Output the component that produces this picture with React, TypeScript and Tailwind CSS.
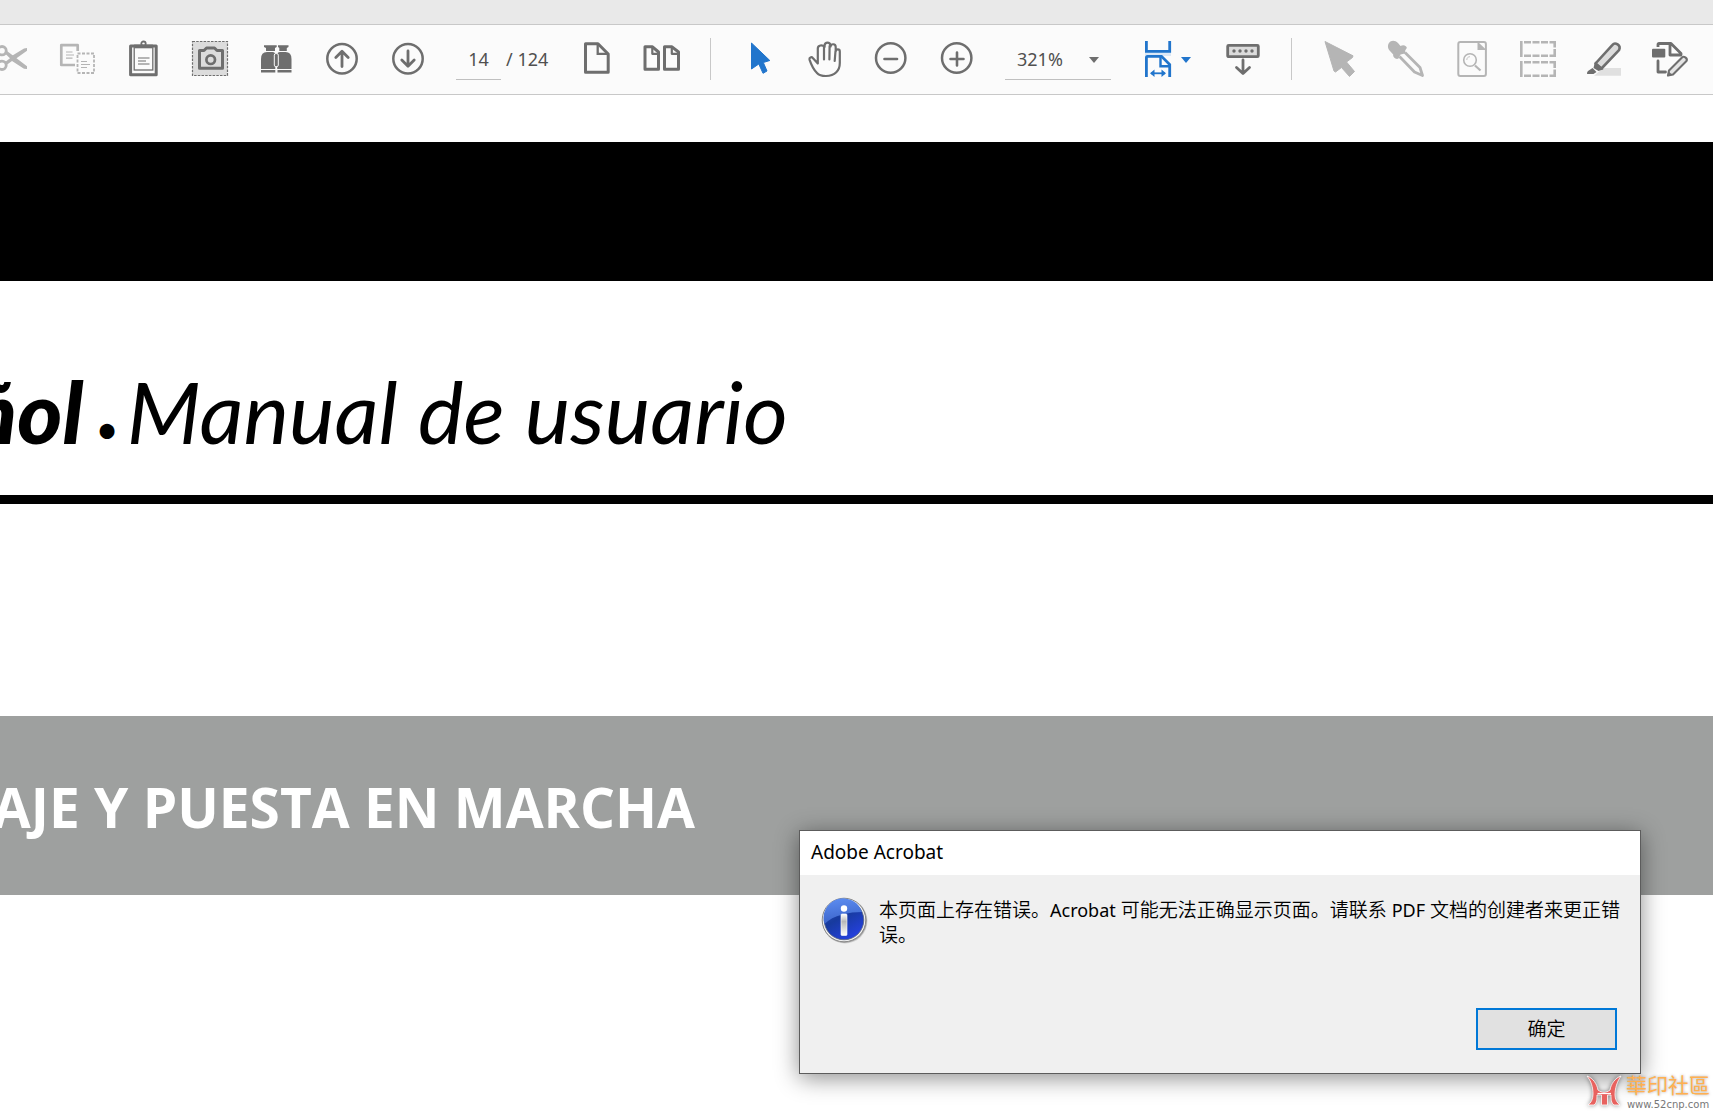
import React from "react";

const DARK = "#6e6e6e";
const LIGHT = "#b5b5b5";
const BLUE = "#2175cc";

function Tool({ label, children }: { label: string; children: React.ReactNode }) {
  return (
    <button type="button" aria-label={label} className="flex h-9 w-[66px] shrink-0 justify-center">
      <svg viewBox="0 0 36 36" className="h-9 w-9 overflow-visible" fill="none" aria-hidden="true">
        {children}
      </svg>
    </button>
  );
}

function Separator() {
  return <div className="-mt-[3px] h-[42px] w-px shrink-0 bg-[#c8c8c8]" />;
}

function EditTools() {
  return (
    <div className="-ml-[21px] flex shrink-0">
      <Tool label="Cut">
        <g stroke={LIGHT} strokeWidth="2.8">
          <circle cx="8" cy="9.7" r="4.2" />
          <circle cx="8" cy="24.3" r="4.2" />
        </g>
        <path d="M11 12.5 L13 10 L33 25.3 V28 L30 27.8 L18 20 L12.5 24 L10.5 21.5 L16 17.2Z" fill={LIGHT} />
        <path d="M16 16 L30 7.5 L33 7 V9.7 L20 19Z" fill={LIGHT} />
      </Tool>
      <Tool label="Copy">
        <path d="M15 24 H1.3 V4.2 H17.7 V10" stroke={LIGHT} strokeWidth="2.7" strokeLinejoin="round" />
        <path d="M6 11 H12.5 M6 14 H14 M6 17.2 H12.5" stroke={LIGHT} strokeWidth="1.2" />
        <rect x="17.5" y="12.5" width="16.5" height="19.5" stroke={LIGHT} strokeWidth="1.8" strokeDasharray="3 1.5" />
        <path d="M21 20.5 H27 M21 23.5 H30 M21 26.5 H27" stroke={LIGHT} strokeWidth="1.2" />
      </Tool>
      <Tool label="Paste">
        <path d="M9 5 H4.6 V33.7 H30.2 V5 H26" stroke={DARK} strokeWidth="3" strokeLinejoin="round" />
        <rect x="8.2" y="5" width="18.6" height="24" stroke={DARK} strokeWidth="1.3" />
        <rect x="8.5" y="3.3" width="18" height="4" fill={DARK} />
        <circle cx="17.5" cy="2.7" r="2.2" stroke={DARK} strokeWidth="1.8" />
        <path d="M12 17 H23.5 M12 20 H20 M12 23 H23.5" stroke={DARK} strokeWidth="1.2" />
      </Tool>
      <Tool label="Take a snapshot">
        <rect x="0.5" y="0.5" width="35" height="34" fill="#dcdcdc" stroke={DARK} strokeWidth="1.2" strokeDasharray="2.5 1.2" />
        <path d="M7.5 9.5 H12 L14.5 7 H22.5 L25 9.5 H30.5 V27.3 H7.5Z" stroke={DARK} strokeWidth="3" strokeLinejoin="round" />
        <circle cx="18.7" cy="18.7" r="4.3" stroke={DARK} strokeWidth="2.7" />
      </Tool>
      <Tool label="Find">
        <path d="M6 4.3 H18.7 V6 L17 7 V10 H8 V7 L6 6Z M20 4.3 H30.5 V6 L28.8 7 V10 H21.3 V7 L20 6Z" fill={DARK} />
        <path d="M3 28 V18 Q3 11 9 11 H14.5 Q17.3 11 17.3 14 V28Z M19.2 28 V14 Q19.2 11 22 11 H27.5 Q33.5 11 33.5 18 V28Z M3 29 H17.3 V31.5 H3Z M19.5 29 H33.5 V31.5 H19.5Z" fill={DARK} />
        <rect x="16.3" y="12.6" width="4" height="13" rx="1.5" fill={DARK} stroke="#fbfbfb" />
      </Tool>
      <Tool label="Previous page">
        <g stroke={DARK} strokeLinecap="round" strokeLinejoin="round">
          <circle cx="18" cy="17.7" r="14.7" strokeWidth="2.5" />
          <path d="M18 25.5 V10.5 M11.8 16.5 L18 10.3 L24.2 16.5" strokeWidth="2.8" />
        </g>
      </Tool>
      <Tool label="Next page">
        <g stroke={DARK} strokeLinecap="round" strokeLinejoin="round">
          <circle cx="18" cy="17.7" r="14.7" strokeWidth="2.5" />
          <path d="M18 10 V25 M11.8 19 L18 25.2 L24.2 19" strokeWidth="2.8" />
        </g>
      </Tool>
    </div>
  );
}

function PageTools() {
  return (
    <div className="flex shrink-0">
      <Tool label="Single page">
        <path d="M6.5 2.8 H19 L29.2 13 V31.2 H6.5Z" stroke={DARK} strokeWidth="3" strokeLinejoin="round" />
        <path d="M18.7 3 V12.8 H29" stroke={DARK} strokeWidth="2.3" />
      </Tool>
      <Tool label="Two pages">
        <g stroke={DARK} strokeWidth="3" strokeLinejoin="round">
          <path d="M0 5.8 H7.5 L13.5 11 V28.3 H0Z" />
          <path d="M19.5 5.8 H27 L33.5 11 V28.3 H19.5Z" />
          <path d="M7.3 6 V12.8 H13.5 M26.8 6 V12.8 H33" strokeWidth="2.2" />
        </g>
      </Tool>
    </div>
  );
}

function NavigateTools() {
  return (
    <div className="flex shrink-0">
      <Tool label="Select">
        <path d="M10.5 2 L28.8 19.5 L22.3 21.5 L26 30 L22 32.3 L17.8 23 L10.5 28Z" fill={BLUE} stroke={BLUE} strokeLinejoin="round" />
      </Tool>
      <Tool label="Hand">
        <path
          d="M10.8 22.5 L5.8 17 C4.5 15.5 2 16.5 2.5 18.6 C5 26 7.5 29.5 10 32 C12 34.3 15 35 19 35 C28 35 32.8 29.5 32.8 22 V10.5 C32.8 7.6 29 7.6 28.7 10.5 V6 C28.7 2.4 24 2.4 23.5 5.5 V4.3 C23 0.7 18 0.7 17.6 4.3 V6 C15.5 3.5 10.8 4 10.8 7.5 V22.5 M17 5 V18.5 M22.6 5 L22.4 18.5 M28.5 10 L27.7 20"
          stroke={DARK}
          strokeWidth="2.2"
          strokeLinecap="round"
          strokeLinejoin="round"
        />
      </Tool>
      <Tool label="Zoom out">
        <circle cx="17.7" cy="17" r="14.7" stroke={DARK} strokeWidth="2.5" />
        <path d="M11.5 18 H24" stroke={DARK} strokeWidth="2.6" strokeLinecap="round" />
      </Tool>
      <Tool label="Zoom in">
        <circle cx="17.7" cy="17" r="14.7" stroke={DARK} strokeWidth="2.5" />
        <path d="M11.5 18 H24.5 M18 11.5 V24.5" stroke={DARK} strokeWidth="2.6" strokeLinecap="round" />
      </Tool>
    </div>
  );
}

function CommentTools() {
  return (
    <div className="ml-[15px] flex shrink-0">
      <Tool label="Edit object">
        <path d="M3 0.5 L31 14.8 L30.5 16.5 L24.5 21 L32.5 30.5 L27.5 35.5 L19.5 26.5 L13.5 31 L12 30Z" fill={LIGHT} stroke={LIGHT} strokeLinejoin="round" />
      </Tool>
      <Tool label="Eyedropper">
        <path d="M1 2 C3 -1 7 -1 10 2 L12.5 5 C15.5 3 19 5 18.8 7 L17.3 9.3 L17 12.5 L12.5 13.5 L10.5 17.5 C8 19 4.5 16 5.2 13.5 L2 10 C-0.5 7.5 -0.5 4 1 2Z" fill={LIGHT} />
        <path d="M11.5 15.5 L26.5 31 L34.5 34.5 L32 26.5 L17 11.5" stroke={LIGHT} strokeWidth="2.8" strokeLinejoin="round" />
      </Tool>
      <Tool label="Search in page">
        <rect x="4.3" y="1" width="27.6" height="34" rx="2" stroke={LIGHT} strokeWidth="2" />
        <path d="M23.5 0.5 L32.5 9 H23.5Z" fill={LIGHT} />
        <circle cx="16" cy="19" r="6.3" stroke={LIGHT} strokeWidth="1.6" />
        <path d="M12.8 19 C12.8 17 14 15.7 16 15.7" stroke={LIGHT} strokeWidth="0.8" />
        <path d="M21 24.5 L26.5 29.5" stroke={LIGHT} strokeWidth="2.2" />
      </Tool>
      <Tool label="Crop pages">
        <path d="M1.3 0 V16 M1.3 20 V36 M34.7 0 V6.5 M34.7 8 V16 M34.7 20 V27 M34.7 28.5 V36" stroke={LIGHT} strokeWidth="2.6" />
        <path d="M4 1.3 H36 M4 14.7 H36 M4 21.3 H36 M4 34.7 H36" stroke={LIGHT} strokeWidth="2.6" strokeDasharray="7 1.5" />
      </Tool>
      <Tool label="Highlight text">
        <path d="M8 34.7 L17 27 H35 V34.7Z" fill="#e0e0e0" />
        <path d="M9.5 22.5 L26.5 3.8 C29 0.8 35.5 4 33 9.2 L15.5 27.5Z" fill="#dcdcdc" stroke={DARK} strokeWidth="2.6" strokeLinejoin="round" />
        <path d="M9 20.5 L17.5 28.3 L12.5 30 L7.5 27Z M6.5 27 L10.5 31 L7.5 33 H1.5 C0.5 33 1 31.5 2 30Z" fill={DARK} />
      </Tool>
      <Tool label="Edit PDF">
        <rect x="0" y="7.7" width="13.3" height="8.7" rx="1" fill={DARK} />
        <path d="M6 6 V3.5 Q6 2.5 7 2.5 H19 L29 12.5 V14 H18 V3" stroke={DARK} strokeWidth="2.8" strokeLinejoin="round" />
        <path d="M6 20 V31 H13.5" stroke={DARK} strokeWidth="2.8" strokeLinecap="round" strokeLinejoin="round" />
        <path d="M16 34.5 L17 29.5 L30.5 16 C32 15 36 17.5 34.5 20 L21 33.5Z" fill="#e4e4e4" stroke={DARK} strokeWidth="2.1" strokeLinejoin="round" />
        <path d="M15.5 35.3 L16.7 30.5 L20.5 34Z" fill={DARK} />
      </Tool>
    </div>
  );
}

function Toolbar() {
  return (
    <header className="flex h-[71px] items-start overflow-hidden border-y border-[#c8c8c8] bg-[#fbfbfb] pt-4 text-[18px] text-[#505050]">
      <EditTools />
      <div className="ml-[15px] flex h-[39px] shrink-0 items-stretch">
        <input
          aria-label="Page number"
          defaultValue="14"
          className="w-[45px] border-b border-[#c0c0c0] bg-transparent pb-px text-center outline-none"
        />
        <span className="flex w-[63px] items-center pb-0.5 pl-[5px]">/ 124</span>
      </div>
      <PageTools />
      <div className="ml-[14px] flex shrink-0">
        <Separator />
      </div>
      <div className="ml-[15px]">
        <NavigateTools />
      </div>
      <div className="relative ml-[15px] h-[39px] w-[106px] shrink-0 border-b border-[#c0c0c0]">
        <select
          aria-label="Zoom level"
          defaultValue="321%"
          className="h-full w-full appearance-none bg-transparent pb-px pl-3 outline-none"
        >
          <option>321%</option>
          <option>100%</option>
          <option>200%</option>
        </select>
        <svg viewBox="0 0 10 6" className="pointer-events-none absolute top-4 right-3 h-[6px] w-[10px]" aria-hidden="true">
          <path d="M0 0 H10 L5 6Z" fill={DARK} />
        </svg>
      </div>
      <div className="relative ml-[14px] flex w-[85px] shrink-0">
        <Tool label="Page fit">
          <path d="M5 9.5 H31 V15 H5Z" fill="#dbe8f6" />
          <path d="M6.4 0 V10.3 H29.7 V0 M6.4 36 V16.5 Q6.4 15.3 7.6 15.3 H21.5 L29.7 23.5 V36" stroke={BLUE} strokeWidth="2.8" />
          <path d="M20.5 15 V25.3 H30" stroke={BLUE} strokeWidth="2.4" />
          <path d="M11 32.3 H25" stroke={BLUE} strokeWidth="1.8" />
          <path d="M14.5 28.6 V36 L10 32.3Z M21.5 28.6 V36 L26 32.3Z" fill={BLUE} />
        </Tool>
        <svg viewBox="0 0 10 6" className="pointer-events-none absolute top-4 left-[56px] h-[6px] w-[10px]" aria-hidden="true">
          <path d="M0 0 H10 L5 6Z" fill={BLUE} />
        </svg>
      </div>
      <Tool label="Show toolbar">
        <rect x="2.7" y="4.3" width="30.6" height="11.4" rx="1" fill="#dcdcdc" stroke={DARK} strokeWidth="2.8" />
        <g fill={DARK}>
          <circle cx="9" cy="10" r="1.7" />
          <circle cx="15" cy="10" r="1.7" />
          <circle cx="21" cy="10" r="1.7" />
          <circle cx="27" cy="10" r="1.7" />
        </g>
        <path d="M18 19 V32 M11.5 26.5 L18 32.5 L24.5 26.5" stroke={DARK} strokeWidth="2.8" strokeLinecap="round" strokeLinejoin="round" />
      </Tool>
      <div className="ml-[15px] flex shrink-0">
        <Separator />
      </div>
      <CommentTools />
    </header>
  );
}

function InfoIcon() {
  return (
    <svg viewBox="0 0 48 48" className="mt-px h-12 w-12 shrink-0" aria-hidden="true">
      <defs>
        <linearGradient id="orb" x1="0" y1="0" x2="0.6" y2="1">
          <stop offset="0" stopColor="#2a52b8" />
          <stop offset="0.5" stopColor="#173a9e" />
          <stop offset="1" stopColor="#2440dc" />
        </linearGradient>
        <linearGradient id="gloss" x1="0.3" y1="0" x2="0.5" y2="1">
          <stop offset="0" stopColor="#5c8cf0" />
          <stop offset="1" stopColor="#3a62c8" />
        </linearGradient>
        <linearGradient id="stem" x1="0" y1="0" x2="0" y2="1">
          <stop offset="0" stopColor="#ffffff" />
          <stop offset="0.35" stopColor="#b8b8b8" />
          <stop offset="1" stopColor="#ffffff" />
        </linearGradient>
      </defs>
      <circle cx="25" cy="25" r="22.5" fill="#000000" opacity="0.12" />
      <circle cx="24.5" cy="24.5" r="22.3" fill="#000000" opacity="0.25" />
      <circle cx="24" cy="24" r="21.8" fill="#f4f4f4" stroke="#8a8a8a" />
      <circle cx="24" cy="24" r="19.8" fill="url(#orb)" stroke="#5a6478" strokeWidth="0.8" />
      <path d="M4.5 28 A19.5 19.5 0 0 1 42 16 C30 16 13 19 4.5 28Z" fill="url(#gloss)" />
      <circle cx="24" cy="12.5" r="3.2" fill="#ffffff" />
      <rect x="21" y="18" width="6" height="21.5" rx="1" fill="url(#stem)" stroke="#ffffff" strokeWidth="0.6" />
    </svg>
  );
}

function ErrorDialog() {
  return (
    <section
      role="dialog"
      aria-labelledby="dialog-title"
      className="absolute top-[830px] right-[72px] flex h-[244px] w-[842px] flex-col border border-[#5c5c5c] bg-[#f0f0f0] text-black shadow-[0_4px_22px_rgba(0,0,0,0.45)]"
    >
      <h2 id="dialog-title" className="h-11 bg-white pl-[11px] text-[19px] leading-[42px]">
        Adobe Acrobat
      </h2>
      <div className="flex grow gap-2 pt-5 pl-5">
        <InfoIcon />
        <p className="w-[745px] pt-[3px] pl-[3px] text-[19px] leading-[25px] font-[350]">
          本页面上存在错误。<span className="text-[18px] font-normal">Acrobat</span> 可能无法正确显示页面。请联系{" "}
          <span className="text-[18px] font-normal">PDF</span> 文档的创建者来更正错误。
        </p>
      </div>
      <div className="flex justify-end pr-[23px] pb-[23px]">
        <button type="button" className="h-[42px] w-[141px] border-2 border-[#0078d7] bg-[#e1e1e1] text-[19px] leading-none font-[350]">
          确定
        </button>
      </div>
    </section>
  );
}

function Watermark() {
  return (
    <div className="absolute right-[3px] bottom-0 flex items-end gap-1">
      <svg viewBox="0 0 36 32" className="mb-1 h-8 w-9 overflow-visible drop-shadow-[0_0_2px_rgba(0,0,0,0.5)]" aria-hidden="true">
        <path
          d="M1 1 C7 3 11 9 12 15 C16 18 20 18 24 15 C25 9 29 3 35 1 C31 7 29 13 29 20 C29 24 31 28 34 30 H28 C25 28 25 24 25 20 H21.5 V30 H15.5 V20 H11 C11 24 11 28 8 30 H2 C5 28 7 24 7 19 C7 12 5 6 1 1Z"
          fill="#e8625f"
          stroke="#ffffff"
          strokeWidth="0.8"
        />
        <path d="M11.5 18.5 H25" stroke="#ffffff" strokeWidth="1.2" />
      </svg>
      <div className="flex flex-col">
        <span className="pb-0.5 font-['Noto_Sans_CJK_TC',sans-serif] text-[21px] leading-[26px] text-[#ffb050] [text-shadow:0_0_3px_rgba(0,0,0,0.35)]" lang="zh-Hant">
          華印社區
        </span>
        <span className="text-center font-['DejaVu_Sans'] text-[10px] leading-3 text-[#777777] [text-shadow:0_0_2px_#ffffff]">
          www.52cnp.com
        </span>
      </div>
    </div>
  );
}

export default function App() {
  return (
    <div className="relative min-h-screen overflow-hidden bg-white font-['Noto_Sans','Noto_Sans_CJK_SC',sans-serif]">
      <div className="h-6 bg-[#e9e9e9]" />
      <Toolbar />
      <main>
        <div className="mt-[47px] h-[139px] bg-black" />
        <div className="flex h-[223px] items-end border-b-[9px] border-black pb-4">
          <h1 className="flex w-[788px] items-baseline justify-end font-['Lato',sans-serif] text-[86px] leading-[100px] whitespace-nowrap text-black italic">
            <b className="font-black">Español</b>
            <span className="mr-2 ml-3 text-[40px]">•</span>
            <span>Manual de usuario</span>
          </h1>
        </div>
        <div className="mt-[212px] flex h-[179px] items-center bg-[#9ea09f] pt-0.5">
          <h2 className="flex w-[695px] justify-end font-['Open_Sans',sans-serif] text-[55px] leading-[76px] font-bold whitespace-nowrap text-white">
            MONTAJE Y PUESTA EN MARCHA
          </h2>
        </div>
      </main>
      <ErrorDialog />
      <Watermark />
    </div>
  );
}
